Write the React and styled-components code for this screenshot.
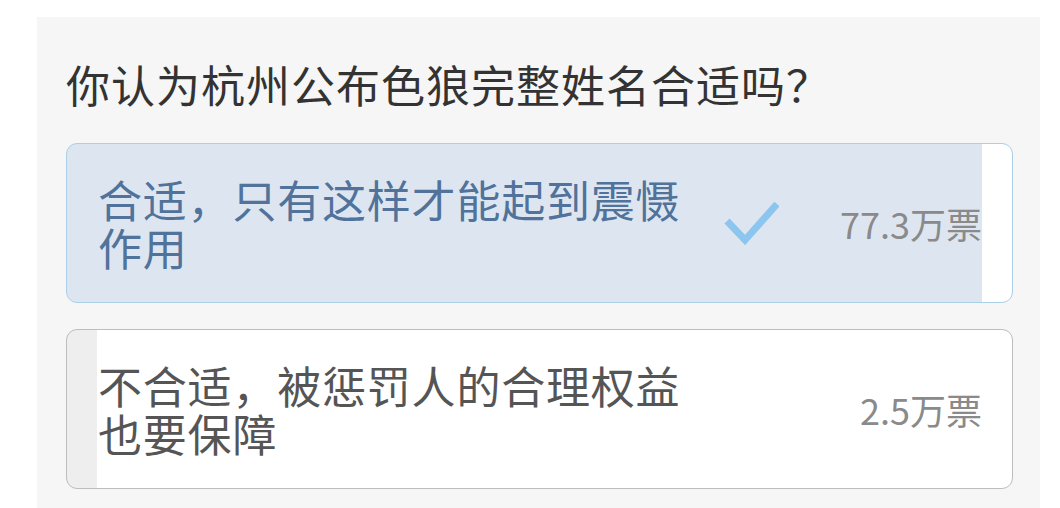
import React from 'react'
import styled, { createGlobalStyle } from 'styled-components'

const options = [
  { text: '合适，只有这样才能起到震慑作用', votes: 77.3, chosen: true },
  { text: '不合适，被惩罚人的合理权益也要保障', votes: 2.5, chosen: false },
]

const App = () => {
  const total = options.reduce((sum, o) => sum + o.votes, 0)

  return (
    <>
      <GlobalStyle />
      <Panel>
        <Question>你认为杭州公布色狼完整姓名合适吗？</Question>
        <OptionList>
          {options.map((option, index) => (
            <Option
              key={index}
              $chosen={option.chosen}
              $pct={(option.votes / total) * 100}
            >
              <OptionText $chosen={option.chosen}>{option.text}</OptionText>
              <CheckSlot>
                {option.chosen && (
                  <svg width="56" height="44" viewBox="0 0 56 44">
                    <path
                      d="M4 20 L22 39 L54 3"
                      fill="none"
                      stroke="#8cc6ef"
                      strokeWidth="7"
                      strokeLinejoin="miter"
                    />
                  </svg>
                )}
              </CheckSlot>
              <Votes>{option.votes}万票</Votes>
            </Option>
          ))}
        </OptionList>
      </Panel>
    </>
  )
}

export default App

const GlobalStyle = createGlobalStyle`
  body {
    margin: 0;
    background: #ffffff;
    font-family: "Noto Sans CJK SC", "Noto Sans", sans-serif;
  }
`

const Panel = styled.div`
  margin: 17px 0 0 37px;
  width: 1003px;
  box-sizing: border-box;
  background: #f6f6f6;
  padding: 39px 27px 40px 29px;
`

const Question = styled.h1`
  margin: 0 0 31px;
  font-size: 44px;
  line-height: 56px;
  font-weight: 400;
  color: #333333;
  letter-spacing: 1px;
`

const OptionList = styled.div`
  display: flex;
  flex-direction: column;
  gap: 26px;
`

const Option = styled.div`
  display: flex;
  align-items: center;
  height: 160px;
  box-sizing: border-box;
  border: 1.5px solid ${p => (p.$chosen ? '#a9d0e6' : '#bdbdbd')};
  border-radius: 11px;
  padding: 0 30px 0 31px;
  background: linear-gradient(
    90deg,
    ${p => (p.$chosen ? '#dde6f0' : '#eeeeee')} ${p => p.$pct}%,
    #ffffff ${p => p.$pct}%
  );
`

const OptionText = styled.div`
  flex: 0 0 590px;
  font-size: 44px;
  line-height: 48px;
  letter-spacing: 0.8px;
  color: ${p => (p.$chosen ? '#50729b' : '#555555')};
`

const CheckSlot = styled.div`
  flex: 0 0 56px;
  margin-left: 35px;
  display: flex;
  align-items: center;
  svg {
    display: block;
  }
`

const Votes = styled.div`
  flex: 1;
  text-align: right;
  font-size: 36px;
  color: #8a8a8a;
`
